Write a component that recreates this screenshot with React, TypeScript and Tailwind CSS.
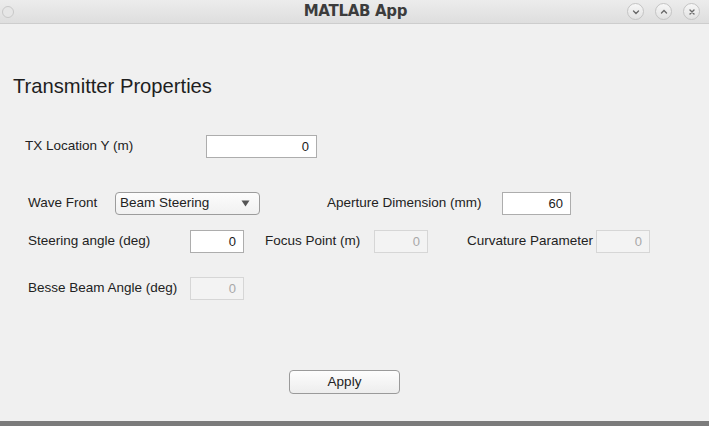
import React from "react";

function WinButton({ kind }: { kind: "down" | "up" | "close" }) {
  return (
    <div className="w-[17px] h-[17px] rounded-full border border-[#c4c4c4] bg-gradient-to-b from-[#f7f7f7] to-[#e2e2e2] flex items-center justify-center">
      <svg width="8" height="8" viewBox="0 0 8 8" fill="none" stroke="#6a6a6a" strokeWidth="1.4" strokeLinecap="round">
        {kind === "down" && <path d="M1.5 3 L4 5.5 L6.5 3" />}
        {kind === "up" && <path d="M1.5 5 L4 2.5 L6.5 5" />}
        {kind === "close" && <path d="M2 2 L6 6 M6 2 L2 6" />}
      </svg>
    </div>
  );
}

function NumField({ value, width, disabled }: { value: string; width: string; disabled?: boolean }) {
  return (
    <div
      className={`${width} h-[23px] flex items-center justify-end pr-[7px] border text-[13px] ${
        disabled ? "bg-[#f3f3f3] border-[#d6d6d6] text-[#a8a8a8]" : "bg-white border-[#adadad] text-[#1a1a1a]"
      }`}
    >
      {value}
    </div>
  );
}

export default function App() {
  return (
    <div className="w-[709px] h-[426px] bg-[#f0f0f0] flex flex-col overflow-hidden" style={{ fontFamily: '"Liberation Sans", Arial, sans-serif' }}>
      {/* Title bar */}
      <div className="h-[24px] shrink-0 bg-gradient-to-b from-[#ececec] to-[#dedede] border-b border-[#cdcdcd] flex items-center relative">
        <div className="ml-[2px] w-[12px] h-[12px] rounded-full border border-[#c8c8c8] bg-[#e6e6e6]" />
        <div className="absolute left-0 right-0 top-0 h-full flex items-center justify-center pointer-events-none">
          <span className="text-[15px] font-bold text-[#3c3c3c] pl-[2px]" style={{ fontFamily: '"DejaVu Sans", sans-serif', letterSpacing: "-0.3px" }}>
            MATLAB App
          </span>
        </div>
        <div className="ml-auto mr-[9px] flex items-center gap-[11px]">
          <WinButton kind="down" />
          <WinButton kind="up" />
          <WinButton kind="close" />
        </div>
      </div>

      {/* Body */}
      <div className="flex-1 flex flex-col text-[13.5px] text-[#222]">
        <h1 className="mt-[50px] ml-[13px] text-[20.2px] leading-[24px] text-[#1e1e1e]">Transmitter Properties</h1>

        <div className="mt-[37px] ml-[25px] flex items-center">
          <span className="w-[181px]">TX Location Y (m)</span>
          <NumField value="0" width="w-[111px]" />
        </div>

        <div className="mt-[34px] ml-[28px] flex items-center">
          <span className="w-[87px]">Wave Front</span>
          <div className="w-[145px] h-[23px] rounded-[4px] border border-[#9c9c9c] bg-gradient-to-b from-[#fcfcfc] to-[#f1f1f1] flex items-center pl-[4px] pr-[9px]">
            <span className="flex-1">Beam Steering</span>
            <svg width="9" height="7" viewBox="0 0 9 7">
              <path d="M0.5 0.5 H8.5 L4.5 6.5 Z" fill="#555" />
            </svg>
          </div>
          <span className="ml-[67px] w-[175px]">Aperture Dimension (mm)</span>
          <NumField value="60" width="w-[69px]" />
        </div>

        <div className="mt-[15px] ml-[28px] flex items-center">
          <span className="w-[162px]">Steering angle (deg)</span>
          <NumField value="0" width="w-[54px]" />
          <span className="ml-[21px] w-[109px]">Focus Point (m)</span>
          <NumField value="0" width="w-[54px]" disabled />
          <span className="ml-[39px] w-[129px] whitespace-nowrap">Curvature Parameter</span>
          <NumField value="0" width="w-[54px]" disabled />
        </div>

        <div className="mt-[24px] ml-[28px] flex items-center">
          <span className="w-[162px]">Besse Beam Angle (deg)</span>
          <NumField value="0" width="w-[54px]" disabled />
        </div>

        <div className="mt-[70px] ml-[289px]">
          <button className="w-[111px] h-[24px] rounded-[4px] border border-[#9a9a9a] bg-gradient-to-b from-[#fdfdfd] to-[#ededed] text-[13.5px] text-[#222]">
            Apply
          </button>
        </div>
      </div>

      <div className="h-[5px] shrink-0 bg-[#7b7b7b]" />
    </div>
  );
}
